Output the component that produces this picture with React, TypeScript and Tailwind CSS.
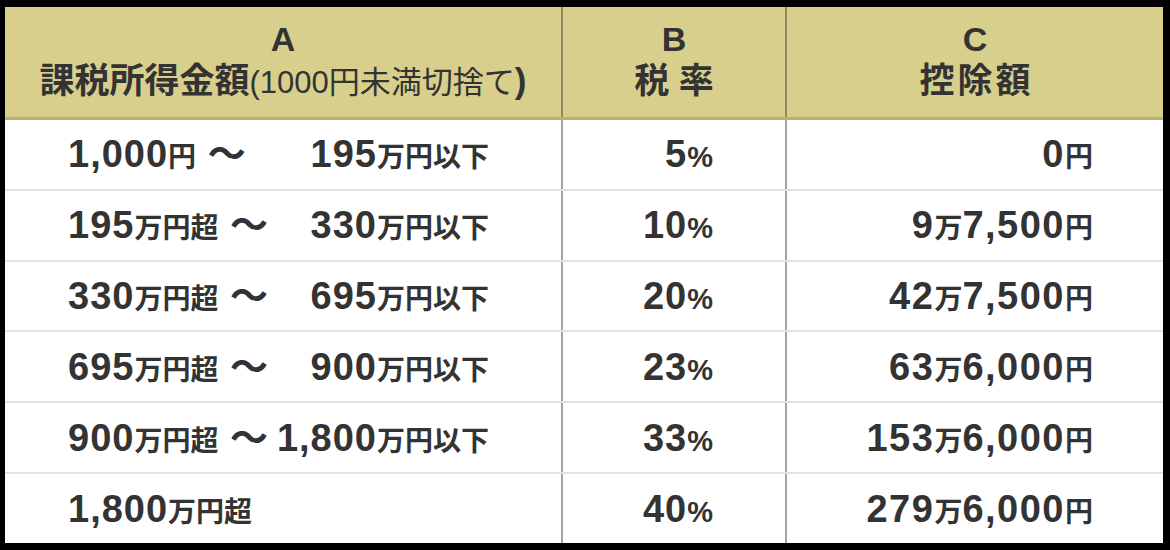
import React from "react";

const FONT = '"Liberation Sans", "Noto Sans CJK JP", sans-serif';

type Row = { a1: React.ReactNode; a2?: React.ReactNode; b: string; c: React.ReactNode };

const S = ({ children }: { children: React.ReactNode }) => (
  <span className="text-[28px] tracking-[0px]">{children}</span>
);

const rows: Row[] = [
  { a1: <>1,000<S>円</S> ～</>, a2: <>195<S>万円以下</S></>, b: "5", c: <>0<S>円</S></> },
  { a1: <>195<S>万円超</S> ～</>, a2: <>330<S>万円以下</S></>, b: "10", c: <>9<S>万</S>7,500<S>円</S></> },
  { a1: <>330<S>万円超</S> ～</>, a2: <>695<S>万円以下</S></>, b: "20", c: <>42<S>万</S>7,500<S>円</S></> },
  { a1: <>695<S>万円超</S> ～</>, a2: <>900<S>万円以下</S></>, b: "23", c: <>63<S>万</S>6,000<S>円</S></> },
  { a1: <>900<S>万円超</S> ～</>, a2: <>1,800<S>万円以下</S></>, b: "33", c: <>153<S>万</S>6,000<S>円</S></> },
  { a1: <>1,800<S>万円超</S></>, b: "40", c: <>279<S>万</S>6,000<S>円</S></> },
];

export default function App() {
  return (
    <div className="w-[1170px] h-[550px] bg-black pt-[7px] pl-[5px] pr-[7px] pb-[7px]">
      <div
        className="w-full h-full bg-white flex flex-col text-[#333333] font-bold"
        style={{ fontFamily: FONT }}
      >
        {/* Header */}
        <div className="h-[113px] grid grid-cols-[558px_224px_376px] bg-[#d8cf8c] border-b-[3px] border-[#b9b073]">
          <div className="flex flex-col items-center justify-center border-r-2 border-[#8f8a66] leading-none">
            <div className="text-[34px] -mt-[4px]">A</div>
            <div className="mt-[7px] flex items-baseline">
              <span className="text-[35px]">課税所得金額</span>
              <span className="text-[31px] font-normal">(1000円未満切捨て</span>
              <span className="text-[35px]">)</span>
            </div>
          </div>
          <div className="flex flex-col items-center justify-center border-r-2 border-[#8f8a66] leading-none">
            <div className="text-[34px] -mt-[4px]">B</div>
            <div className="mt-[7px] text-[35px]">税 率</div>
          </div>
          <div className="flex flex-col items-center justify-center leading-none">
            <div className="text-[34px] -mt-[4px]">C</div>
            <div className="mt-[7px] text-[35px] tracking-[3px] pl-[3px]">控除額</div>
          </div>
        </div>
        {/* Body */}
        {rows.map((r, i) => (
          <div
            key={i}
            className={`flex-1 grid grid-cols-[558px_224px_376px] ${i < rows.length - 1 ? "border-b-2 border-[#e2e2e2]" : ""}`}
          >
            <div className="flex items-center border-r-2 border-[#a3a3a3] pl-[63px] pr-[72px] text-[38px] leading-none">
              <div className="flex w-full justify-between items-baseline">
                <span className="tracking-[1px]">{r.a1}</span>
                {r.a2 && <span className="tracking-[1px]">{r.a2}</span>}
              </div>
            </div>
            <div className="flex items-center justify-end border-r-2 border-[#a3a3a3] pr-[72px] text-[38px] leading-none">
              <span className="tracking-[1px]">
                {r.b}
                <span className="text-[29px] tracking-[0px]">%</span>
              </span>
            </div>
            <div className="flex items-center justify-end pr-[70px] text-[38px] leading-none">
              <span className="tracking-[1.5px]">{r.c}</span>
            </div>
          </div>
        ))}
      </div>
    </div>
  );
}
